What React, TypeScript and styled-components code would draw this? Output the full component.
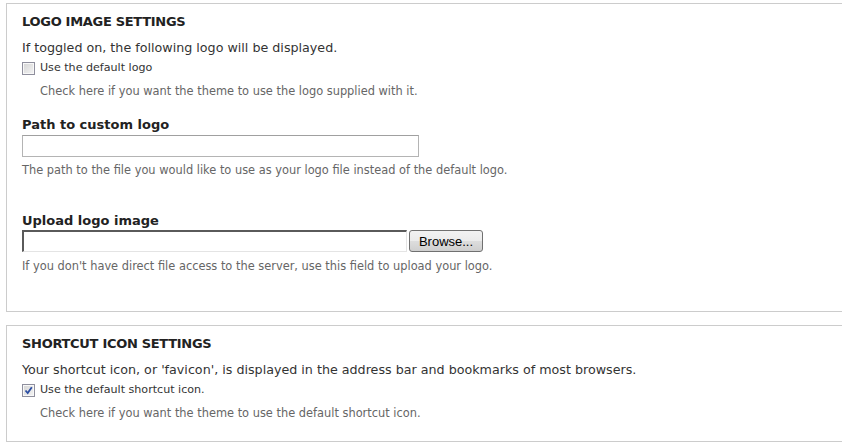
import React from "react";
import styled, { createGlobalStyle } from "styled-components";

const Global = createGlobalStyle`
  html, body { margin: 0; padding: 0; background: #fff; overflow: hidden; }
  body { font-family: "DejaVu Sans", Verdana, sans-serif; }
`;

const Page = styled.div`
  width: 842px;
  height: 446px;
  overflow: hidden;
  padding: 3px 0 0 6px;
  box-sizing: border-box;
  display: flex;
  flex-direction: column;
  gap: 13px;
`;

const Fieldset = styled.section<{ $h: number }>`
  width: 900px;
  height: ${(p) => p.$h}px;
  box-sizing: border-box;
  border: 1px solid #cccccc;
  padding: 10px 15px 0 15px;
  display: flex;
  flex-direction: column;
  flex-shrink: 0;
`;

const Legend = styled.div`
  font-size: 13px;
  font-weight: bold;
  text-transform: uppercase;
  letter-spacing: -0.3px;
  color: #222;
  line-height: 16px;
`;

const Intro = styled.div`
  font-size: 12.7px;
  color: #333;
  line-height: 16px;
  margin-top: 10px;
`;

const CheckRow = styled.label`
  display: flex;
  align-items: center;
  gap: 5px;
  margin-top: 4px;
  font-size: 11.1px;
  color: #333;
  line-height: 14px;
`;

const Box = styled.span`
  width: 11px;
  height: 11px;
  border: 1px solid #8f8f9d;
  background: linear-gradient(135deg, #d4d4d4 0%, #f4f4f4 100%);
  display: inline-flex;
  align-items: center;
  justify-content: center;
  box-shadow: inset 0 0 0 1px #f8f8f8;
  margin-top: 2px;
`;

const Description = styled.div<{ $indent?: boolean; $top?: number }>`
  font-size: 11.4px;
  color: #666;
  line-height: 14px;
  padding-left: ${(p) => (p.$indent ? "18px" : "0")};
  margin-top: ${(p) => (p.$top !== undefined ? p.$top : p.$indent ? 9 : 5)}px;
`;

const FieldLabel = styled.div<{ $top: number }>`
  font-size: 13px;
  font-weight: bold;
  color: #222;
  line-height: 16px;
  margin-top: ${(p) => p.$top}px;
`;

const TextInput = styled.div`
  width: 397px;
  height: 22px;
  box-sizing: border-box;
  border: 1px solid #b4b4b4;
  border-top-color: #a0a0a0;
  margin-top: 2px;
  background: #fff;
`;

const FileRow = styled.div`
  display: flex;
  align-items: center;
  gap: 2px;
  margin-top: 1px;
`;

const FileField = styled.div`
  width: 385px;
  height: 22px;
  box-sizing: border-box;
  border-top: 2px solid #5a5a5a;
  border-left: 2px solid #5a5a5a;
  border-right: 1px solid #e4e4e4;
  border-bottom: 1px solid #e4e4e4;
  background: #fff;
`;

const BrowseButton = styled.div`
  width: 74px;
  height: 22px;
  box-sizing: border-box;
  border: 1px solid #707070;
  border-radius: 3px;
  background: linear-gradient(#f2f2f2 0%, #ebebeb 50%, #dddddd 51%, #cfcfcf 100%);
  font-family: "Liberation Sans", Arial, sans-serif;
  font-size: 13px;
  color: #000;
  display: flex;
  align-items: center;
  justify-content: center;
  padding-top: 1px;
`;

const CheckMark = () => (
  <svg width="9" height="9" viewBox="0 0 9 9">
    <path d="M1.5 4.5 L3.7 7 L7.8 1.2" fill="none" stroke="#2b4ea3" strokeWidth="1.8" />
  </svg>
);

export default function App() {
  return (
    <>
      <Global />
      <Page>
        <Fieldset $h={309}>
          <Legend>Logo image settings</Legend>
          <Intro>If toggled on, the following logo will be displayed.</Intro>
          <CheckRow>
            <Box />
            Use the default logo
          </CheckRow>
          <Description $indent>Check here if you want the theme to use the logo supplied with it.</Description>
          <FieldLabel $top={19}>Path to custom logo</FieldLabel>
          <TextInput />
          <Description $top={6}>The path to the file you would like to use as your logo file instead of the default logo.</Description>
          <FieldLabel $top={36}>Upload logo image</FieldLabel>
          <FileRow>
            <FileField />
            <BrowseButton>Browse...</BrowseButton>
          </FileRow>
          <Description $top={7}>If you don't have direct file access to the server, use this field to upload your logo.</Description>
        </Fieldset>
        <Fieldset $h={117}>
          <Legend>Shortcut icon settings</Legend>
          <Intro>Your shortcut icon, or 'favicon', is displayed in the address bar and bookmarks of most browsers.</Intro>
          <CheckRow>
            <Box>
              <CheckMark />
            </Box>
            Use the default shortcut icon.
          </CheckRow>
          <Description $indent>Check here if you want the theme to use the default shortcut icon.</Description>
        </Fieldset>
      </Page>
    </>
  );
}
